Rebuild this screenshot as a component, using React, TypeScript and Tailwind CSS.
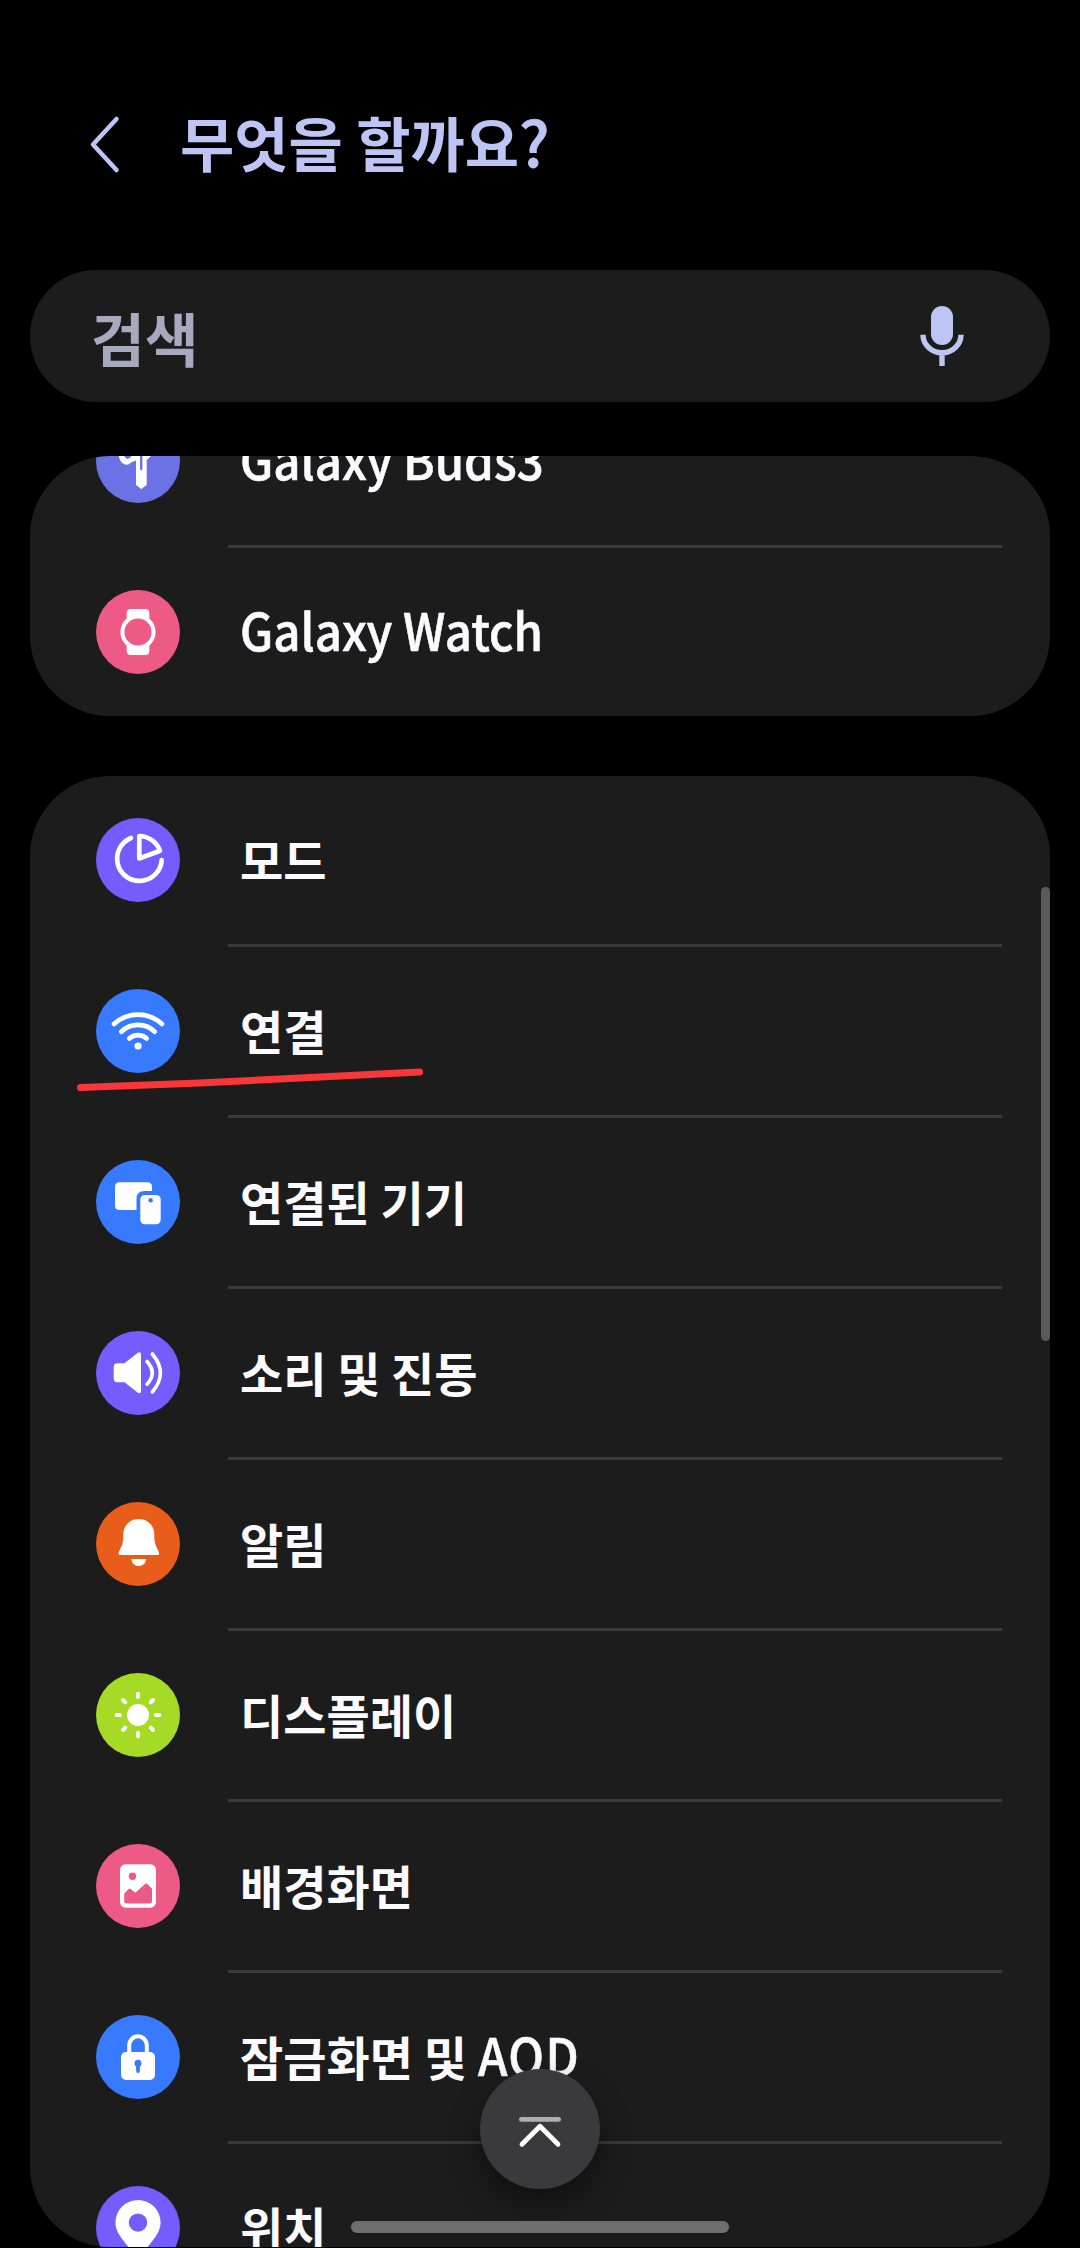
import React from 'react';

interface SettingItem {
  label: string;
  latin?: string;
  color: string;
  icon: React.ReactNode;
}

const deviceItems: SettingItem[] = [
  {
    label: '',
    latin: 'Galaxy Buds3',
    color: 'bg-[#6a72e6]',
    icon: (
      <>
        <path d="M22 30Q22 41 27 44.500Q31.500 47.500 35 43.500L40 41.500V66L45.300 70L50.700 66V41L55 37V30Z" fill="#fff" />
        <path d="M27.500 32Q28 40 31.500 40Q34 40 36 36" fill="#6a72e6" />
        <path d="M45.200 34V50" stroke="#6a72e6" strokeWidth="2.400" strokeLinecap="round" />
      </>
    ),
  },
  {
    label: '',
    latin: 'Galaxy Watch',
    color: 'bg-[#ed5a85]',
    icon: (
      <>
        <rect x="30.700" y="19" width="22.600" height="46" rx="4" fill="#fff" />
        <circle cx="42" cy="42" r="15.600" fill="#ed5a85" stroke="#fff" strokeWidth="4" />
      </>
    ),
  },
];

const settingItems: SettingItem[] = [
  {
    label: '모드',
    color: 'bg-[#755cff]',
    icon: (
      <g fill="none" stroke="#fff" strokeWidth="4.700" strokeLinecap="round" strokeLinejoin="round">
        <path d="M43.300 18V40.500L64 32.700A22.500 22.500 0 0 0 43.300 18Z" />
        <path d="M35 20A22.300 22.300 0 1 0 65.700 42" />
      </g>
    ),
  },
  {
    label: '연결',
    color: 'bg-[#387aff]',
    icon: (
      <>
        <g fill="none" stroke="#fff" strokeWidth="4.700" strokeLinecap="round">
          <path d="M18 35A35.600 35.600 0 0 1 66 35" />
          <path d="M25.300 42.700A24 24 0 0 1 58.700 42.700" />
          <path d="M33.300 49.500A12.800 12.800 0 0 1 50.700 49.500" />
        </g>
        <circle cx="42" cy="57" r="3.600" fill="#fff" />
      </>
    ),
  },
  {
    label: '연결된 기기',
    color: 'bg-[#387aff]',
    icon: (
      <>
        <path d="M23.500 22.300H51.500Q56 22.300 56 26.800V31H48.500Q40.500 31 40.500 39V50H23.500Q19 50 19 45.500V26.800Q19 22.300 23.500 22.300Z" fill="#fff" />
        <rect x="44.300" y="35" width="20.400" height="29.200" rx="4.500" fill="#fff" />
        <circle cx="54.600" cy="40.300" r="2.200" fill="#387aff" />
      </>
    ),
  },
  {
    label: '소리 및 진동',
    color: 'bg-[#755cff]',
    icon: (
      <>
        <path d="M21.500 32.300H28.500L41.500 22Q45 20 45 23.500V60Q45 63.500 41.500 61.500L28.500 51.300H21.500Q17.700 51.300 17.700 47.500V36Q17.700 32.300 21.500 32.300Z" fill="#fff" />
        <g fill="none" stroke="#fff" strokeWidth="3.600" strokeLinecap="round">
          <path d="M51 30.500Q61.500 42 51 53.300" />
          <path d="M56.300 23Q72.500 42 56.300 61" />
        </g>
      </>
    ),
  },
  {
    label: '알림',
    color: 'bg-[#e85d19]',
    icon: (
      <>
        <path d="M42.800 17C33.500 17 27.300 24 27.300 32C27.300 41 26.500 42 22.900 50Q21.800 53 24.500 53H61Q64 53 62.800 50C59 42 58.300 41 58.300 32C58.300 24 52 17 42.800 17Z" fill="#fff" />
        <path d="M35.300 57H50.200Q49.300 64 42.800 64Q36.300 64 35.300 57Z" fill="#fff" />
      </>
    ),
  },
  {
    label: '디스플레이',
    color: 'bg-[#a5da26]',
    icon: (
      <>
        <circle cx="42" cy="42" r="11" fill="#fff" />
        <g stroke="#fff" strokeWidth="4" strokeLinecap="round">
          <path d="M42 20.700V24M42 60V63.300M20.700 42H24M60 42H63.300" />
          <path d="M27 27L29.300 29.300M57 27L54.700 29.300M27 57L29.300 54.700M57 57L54.700 54.700" />
        </g>
      </>
    ),
  },
  {
    label: '배경화면',
    color: 'bg-[#ed5a85]',
    icon: (
      <>
        <rect x="24" y="20.300" width="36" height="43.400" rx="5.500" fill="#fff" />
        <circle cx="36.500" cy="32.300" r="3.700" fill="#ed5a85" />
        <path d="M28.200 49.500L32.600 44.900Q33.600 44 34.600 44.900L39.300 48.800L49.400 39.800Q50.400 39 51.400 39.900L56 44.700V57Q56 59.500 53.500 59.500H30.700Q28.200 59.500 28.200 57Z" fill="#ed5a85" />
      </>
    ),
  },
  {
    label: '잠금화면 및 ',
    latin: 'AOD',
    color: 'bg-[#387aff]',
    icon: (
      <>
        <path d="M33.200 38V30.500A8.800 9.200 0 0 1 50.800 30.500V38" stroke="#fff" strokeWidth="4" fill="none" />
        <rect x="25" y="37" width="34" height="28" rx="5" fill="#fff" />
        <circle cx="42" cy="48.200" r="3.500" fill="#387aff" />
        <path d="M42 48V56" stroke="#387aff" strokeWidth="3.800" strokeLinecap="round" />
      </>
    ),
  },
  {
    label: '위치',
    color: 'bg-[#755cff]',
    icon: (
      <>
        <path d="M42 14A22.600 22.600 0 0 0 19.400 36.600C19.400 47 28 55 34 63Q42 73 50 63C56 55 64.600 47 64.600 36.600A22.600 22.600 0 0 0 42 14Z" fill="#fff" />
        <circle cx="42" cy="36.600" r="9.200" fill="#755cff" />
      </>
    ),
  },
];

const SettingRow: React.FC<{ item: SettingItem; last: boolean }> = ({ item, last }) => (
  <div className="flex flex-col shrink-0">
    <div className="flex items-center h-[168px] pl-[66px]">
      <div className={`${item.color} w-[84px] h-[84px] rounded-full shrink-0`}>
        <svg viewBox="0 0 84 84" className="w-full h-full">{item.icon}</svg>
      </div>
      <span className="ml-[60px] pb-[3px] text-[47px] leading-[60px] font-bold text-[#fafaff] whitespace-pre">
        {item.label}
        {/* Latin glyphs are taller and narrower than the Hangul ones */}
        {item.latin && (
          <span
            className={`inline-block origin-left scale-x-[0.93] text-[51px] leading-none font-medium [-webkit-text-stroke:0.6px_#fafaff] ${
              item.label ? 'tracking-[1.5px]' : ''
            }`}
          >
            {item.latin}
          </span>
        )}
      </span>
    </div>
    {!last && <div className="h-[3px] ml-[198px] mr-12 bg-[#3a3a3c]" />}
  </div>
);

const SettingGroup: React.FC<{ items: SettingItem[] }> = ({ items }) => (
  <div className="flex flex-col shrink-0 bg-[#1c1c1c] rounded-[80px] overflow-hidden">
    {items.map((item, index) => (
      <SettingRow key={index} item={item} last={index === items.length - 1} />
    ))}
  </div>
);

export default function App() {
  return (
    <div className="relative flex flex-col w-[1080px] h-[2248px] bg-black overflow-hidden font-['Noto_Sans_CJK_KR',sans-serif]">
      <header className="flex items-center h-[270px] pl-[83px] pb-4 shrink-0">
        <svg viewBox="0 0 42 60" className="w-[42px] h-[60px] mt-[33px]">
          <path d="M33.500 5L10 30.500L33.500 56" fill="none" stroke="#bdc5f5" strokeWidth="4.500" strokeLinecap="round" strokeLinejoin="round" />
        </svg>
        <h1 className="ml-[55px] mt-[30px] text-[59px] leading-[80px] font-bold text-[#bdc5f5]">
          무엇을 할까요<span className="font-medium text-[62px] leading-none [-webkit-text-stroke:0.8px_#bdc5f5]">?</span>
        </h1>
      </header>

      <div className="flex items-center justify-between h-[132px] mx-[30px] pl-[61px] pr-[80px] rounded-full bg-[#1c1c1c] shrink-0">
        <span className="pt-0.5 text-[58.5px] leading-[80px] font-bold text-[#a7aabf]">검색</span>
        <svg viewBox="0 0 56 72" className="w-[56px] h-[72px]">
          <rect x="17" y="6" width="22" height="39" rx="11" fill="#bdc5f5" />
          <path d="M9 34.700A19 18 0 0 0 47 34.700M28 53V66" fill="none" stroke="#bdc5f5" strokeWidth="5.400" />
        </svg>
      </div>

      {/* Scrolled list, the first group is cut off by the rounded viewport */}
      <main className="flex flex-col justify-start h-[1791px] mt-[54px] mx-[30px] rounded-[80px] overflow-hidden shrink-0">
        <div className="flex flex-col gap-[60px] -mt-[79px]">
          <SettingGroup items={deviceItems} />
          <SettingGroup items={settingItems} />
        </div>
      </main>

      <div className="absolute left-[1041px] top-[887px] w-[9px] h-[454px] rounded-full bg-[#5a5a5b]" />

      <svg viewBox="0 0 360 40" className="absolute left-[70px] top-[1060px] w-[360px] h-[40px]">
        <path d="M10.500 27.500L130 23L240 17.500L349.500 12" fill="none" stroke="#fb3638" strokeWidth="7" strokeLinecap="round" strokeLinejoin="round" />
      </svg>

      <button className="absolute left-[480px] top-[2069px] w-[120px] h-[120px] rounded-full bg-[#3a3a3c] shadow-[0_14px_30px_rgba(0,0,0,0.45)]">
        <svg viewBox="0 0 120 120" className="w-full h-full" fill="none" strokeWidth="4.800" strokeLinecap="round" strokeLinejoin="round">
          <path d="M41.400 50.400H78.600" stroke="#aeaeaf" />
          <path d="M42 75.200L60 57.200L78 75.200" stroke="#fff" />
        </svg>
      </button>

      <div className="absolute left-[351px] top-[2221px] w-[378px] h-3 rounded-full bg-[#6e6e6e]" />
    </div>
  );
}
